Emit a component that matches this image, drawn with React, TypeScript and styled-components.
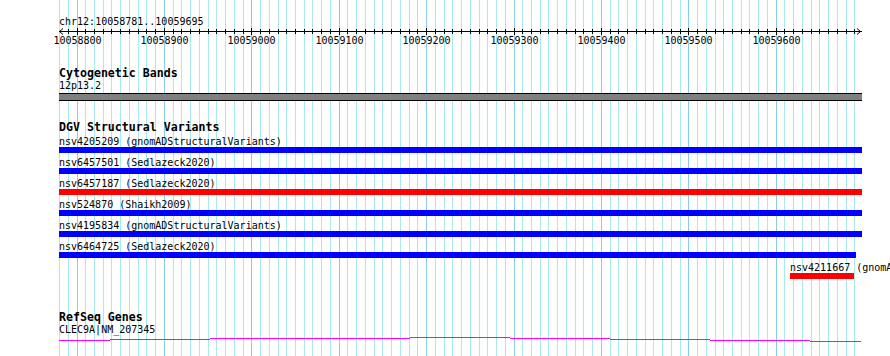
import React from 'react'
import styled, { createGlobalStyle } from 'styled-components'

const VIEW_START = 10058781
const VIEW_END = 10059695
const ORIGIN = 60.4 // page x of VIEW_START
const SCALE = 0.874 // px per bp
const TRACK_LEFT = 59
const TRACK_WIDTH = 803
const PAGE_W = 890
const PAGE_H = 356

const toX = (bp: number) => ORIGIN + (bp - VIEW_START) * SCALE
const gridX = (bp: number) => Math.floor(toX(bp))

const gridPositions: number[] = []
for (let p = 10058780; p <= VIEW_END; p += 10) gridPositions.push(p)

type Tone = 'gain' | 'loss'
type Variant = { name: string; source: string; start: number; end: number; tone: Tone }

const variants: Variant[] = [
  { name: 'nsv4205209', source: 'gnomADStructuralVariants', start: 10058000, end: 10060500, tone: 'gain' },
  { name: 'nsv6457501', source: 'Sedlazeck2020', start: 10058100, end: 10060400, tone: 'gain' },
  { name: 'nsv6457187', source: 'Sedlazeck2020', start: 10058200, end: 10060300, tone: 'loss' },
  { name: 'nsv524870', source: 'Shaikh2009', start: 10057000, end: 10061000, tone: 'gain' },
  { name: 'nsv4195834', source: 'gnomADStructuralVariants', start: 10058500, end: 10060100, tone: 'gain' },
  { name: 'nsv6464725', source: 'Sedlazeck2020', start: 10058600, end: 10059691, tone: 'gain' },
  { name: 'nsv4211667', source: 'gnomADStructuralVariants', start: 10059616, end: 10059689, tone: 'loss' },
]

// intron line of the gene, drawn in steps as the image does
const geneSteps: [number, number, number][] = [
  [59, 110, 344],
  [110, 210, 343],
  [210, 310, 342],
  [310, 410, 342],
  [410, 510, 341],
  [510, 610, 342],
  [610, 710, 343],
  [710, 810, 344],
  [810, 861, 345],
]

const GlobalStyle = createGlobalStyle`
  html, body {
    margin: 0;
    padding: 0;
    background: #ffffff;
  }
`

const Page = styled.div`
  position: relative;
  width: ${PAGE_W}px;
  height: ${PAGE_H}px;
  overflow: hidden;
  background: #ffffff;
  font-family: "DejaVu Sans Mono", "Liberation Mono", monospace;
  color: #000;
`

const GridLayer = styled.svg`
  position: absolute;
  left: 0;
  top: 0;
`

const Tracks = styled.div`
  position: relative;
  width: ${TRACK_WIDTH}px;
  padding: 16px 0 0 ${TRACK_LEFT}px;
`

const Locus = styled.div`
  font-size: 10px;
  line-height: 11px;
  height: 11px;
  white-space: nowrap;
`

const RulerSvg = styled.svg`
  display: block;
  margin-top: 1px;
  overflow: visible;
`

const Track = styled.section<{ $top: number }>`
  margin-top: ${({ $top }) => $top}px;
`

const TrackTitle = styled.div`
  font-size: 11.6px;
  font-weight: bold;
  line-height: 12px;
  height: 12px;
  white-space: nowrap;
`

const SubLabel = styled.div`
  margin-top: 1px;
  font-size: 10px;
  line-height: 11px;
  height: 11px;
  white-space: nowrap;
`

const Band = styled.div`
  margin-top: 2px;
  height: 6px;
  background: #808080;
  border: 1px solid #000;
  border-left: none;
  border-right: none;
`

const FeatureList = styled.div`
  margin-top: 3px;
  display: flex;
  flex-direction: column;
  gap: 4px;
`

const FeatureRow = styled.div`
  display: flex;
  flex-direction: column;
  align-items: flex-start;
`

const FeatureLabel = styled.div`
  font-size: 10px;
  line-height: 11px;
  height: 11px;
  white-space: nowrap;
`

const FeatureBar = styled.div<{ $tone: Tone }>`
  height: 6px;
  background: ${({ $tone }) => ($tone === 'loss' ? '#ff0000' : '#0000ff')};
`

const GeneSvg = styled.svg`
  display: block;
  margin-top: 1px;
  overflow: visible;
`

const Grid = () => (
  <GridLayer width={PAGE_W} height={PAGE_H} shapeRendering="crispEdges">
    {gridPositions.map(p => (
      <rect
        key={p}
        x={gridX(p)}
        y={0}
        width={1}
        height={PAGE_H}
        fill={p % 100 === 0 ? '#8ccbf0' : '#aaeaee'}
      />
    ))}
  </GridLayer>
)

const Ruler = () => {
  const lx = (x: number) => x - TRACK_LEFT
  return (
    <RulerSvg width={TRACK_WIDTH} height={19} shapeRendering="crispEdges">
      <rect x={lx(59)} y={3} width={861 - 59 + 1} height={1} fill="#000" />
      {gridPositions.slice(1).map(p => {
        const major = p % 100 === 0
        return (
          <rect
            key={p}
            x={lx(gridX(p))}
            y={major ? 0 : 1}
            width={1}
            height={major ? 7 : 5}
            fill="#000"
          />
        )
      })}
      <polyline points={`${lx(63)},0.5 ${lx(59.5)},3.5 ${lx(63)},6.5`} fill="none" stroke="#000" strokeWidth={1} shapeRendering="auto" />
      <polyline points={`${lx(857)},0.5 ${lx(860.5)},3.5 ${lx(857)},6.5`} fill="none" stroke="#000" strokeWidth={1} shapeRendering="auto" />
      {gridPositions
        .filter(p => p % 100 === 0)
        .map(p => (
          <text
            key={p}
            x={lx(gridX(p)) + 0.5}
            y={16}
            textAnchor="middle"
            fontSize={10}
            fontFamily='"DejaVu Sans Mono", monospace'
            fill="#000"
          >
            {p}
          </text>
        ))}
    </RulerSvg>
  )
}

const VariantRow = ({ v }: { v: Variant }) => {
  const left = Math.max(TRACK_LEFT, Math.round(toX(v.start)))
  const right = Math.min(TRACK_LEFT + TRACK_WIDTH, Math.round(toX(v.end)))
  return (
    <FeatureRow style={{ marginLeft: left - TRACK_LEFT }}>
      <FeatureLabel>{`${v.name} (${v.source})`}</FeatureLabel>
      <FeatureBar $tone={v.tone} style={{ width: right - left }} />
    </FeatureRow>
  )
}

const GeneLine = () => (
  <GeneSvg width={TRACK_WIDTH} height={7} shapeRendering="crispEdges">
    {geneSteps.map(([x0, x1, y]) => (
      <rect key={x0} x={x0 - TRACK_LEFT} y={y - 340} width={x1 - x0} height={1} fill="#ff00ff" />
    ))}
  </GeneSvg>
)

export default function App() {
  return (
    <>
      <GlobalStyle />
      <Page>
        <Grid />
        <Tracks>
          <Locus>chr12:{VIEW_START}..{VIEW_END}</Locus>
          <Ruler />

          <Track $top={20}>
            <TrackTitle>Cytogenetic Bands</TrackTitle>
            <SubLabel>12p13.2</SubLabel>
            <Band />
          </Track>

          <Track $top={20}>
            <TrackTitle>DGV Structural Variants</TrackTitle>
            <FeatureList>
              {variants.map(v => (
                <VariantRow key={v.name} v={v} />
              ))}
            </FeatureList>
          </Track>

          <Track $top={32}>
            <TrackTitle>RefSeq Genes</TrackTitle>
            <SubLabel>CLEC9A|NM_207345</SubLabel>
            <GeneLine />
          </Track>
        </Tracks>
      </Page>
    </>
  )
}
